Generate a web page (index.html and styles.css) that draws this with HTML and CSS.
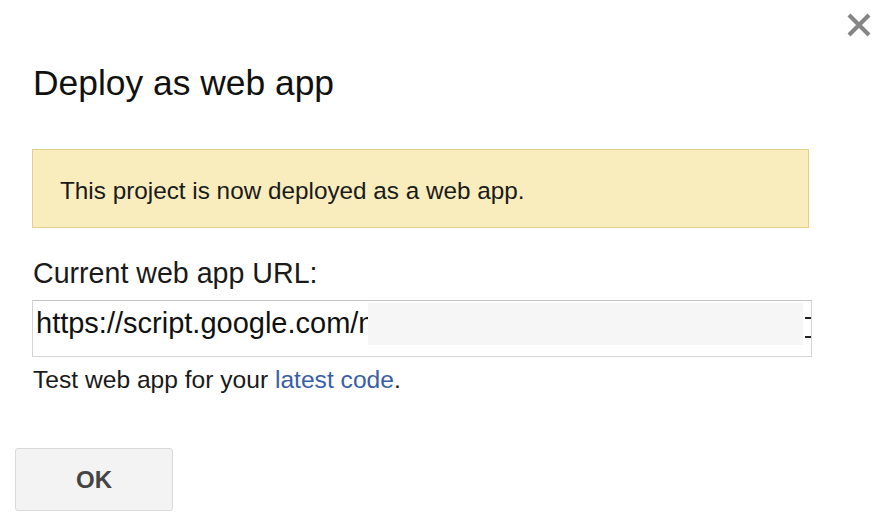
FILE: index.html
```html
<!DOCTYPE html>
<html>
<head>
<meta charset="utf-8">
<link rel="stylesheet" href="styles.css">
</head>
<body>
<div class="dialog">
  <div class="close-row">
    <svg class="close" width="26" height="26" viewBox="0 0 26 26">
      <path d="M3 3 L23 23 M23 3 L3 23" stroke="#858585" stroke-width="4.2" stroke-linecap="butt" fill="none"/>
    </svg>
  </div>
  <div class="title">Deploy as web app</div>
  <div class="notice">This project is now deployed as a web app.</div>
  <div class="label">Current web app URL:</div>
  <div class="input">
    <span class="url">https://script.google.com/n</span>
    <span class="redact"></span>
    <span class="tail"><i class="mark"></i><i class="mark"></i></span>
  </div>
  <div class="test">Test web app for your <a class="link" href="#">latest code</a>.</div>
  <div class="actions">
    <button class="ok">OK</button>
  </div>
</div>
</body>
</html>
```
FILE: styles.css
```css
html, body {
  margin: 0;
  padding: 0;
  background: #ffffff;
}
body {
  font-family: "Liberation Sans", Arial, sans-serif;
  color: #1a1a1a;
  width: 886px;
  height: 522px;
  overflow: hidden;
}
.dialog {
  display: flex;
  flex-direction: column;
  align-items: flex-start;
}
.close-row {
  align-self: stretch;
  display: flex;
  justify-content: flex-end;
  padding: 12px 14px 0 0;
}
.close {
  display: block;
}
.title {
  margin: 25px 0 0 33px;
  font-size: 35.4px;
  line-height: 40px;
  color: #111;
}
.notice {
  margin: 46px 0 0 32px;
  box-sizing: border-box;
  width: 777px;
  height: 79px;
  background: #f9edbe;
  border: 1px solid #e6cf8b;
  padding: 27px 0 0 27px;
  font-size: 24.3px;
  line-height: 28px;
  color: #1a1a1a;
}
.label {
  margin: 29px 0 0 33px;
  font-size: 28.6px;
  line-height: 32px;
  color: #1a1a1a;
}
.input {
  margin: 11px 0 0 32px;
  box-sizing: border-box;
  width: 780px;
  height: 57px;
  border: 1px solid #d4d4d4;
  border-top-color: #c4c4c4;
  padding: 2px 0 0 3px;
  display: flex;
  align-items: flex-start;
}
.url {
  margin-top: 4px;
  font-size: 29px;
  line-height: 32px;
  white-space: nowrap;
  overflow: hidden;
  width: 332px;
  color: #111;
}
.redact {
  flex: 1;
  height: 42px;
  background: #f6f6f6;
}
.tail {
  width: 6px;
  margin-left: 2px;
  display: flex;
  flex-direction: column;
  padding-top: 14px;
  gap: 17px;
}
.mark {
  display: block;
  width: 6px;
  height: 2px;
  background: #222;
}
.test {
  margin: 9px 0 0 33px;
  font-size: 24.6px;
  line-height: 28px;
  color: #1a1a1a;
}
.link {
  color: #3a5ea7;
  text-decoration: none;
}
.actions {
  margin: 54px 0 0 15px;
}
.ok {
  box-sizing: border-box;
  width: 158px;
  height: 63px;
  background: #f3f3f3;
  border: 1px solid #dadada;
  border-radius: 3px;
  font-family: "Liberation Sans", Arial, sans-serif;
  font-weight: bold;
  font-size: 24px;
  color: #444;
  padding: 0;
}
```
